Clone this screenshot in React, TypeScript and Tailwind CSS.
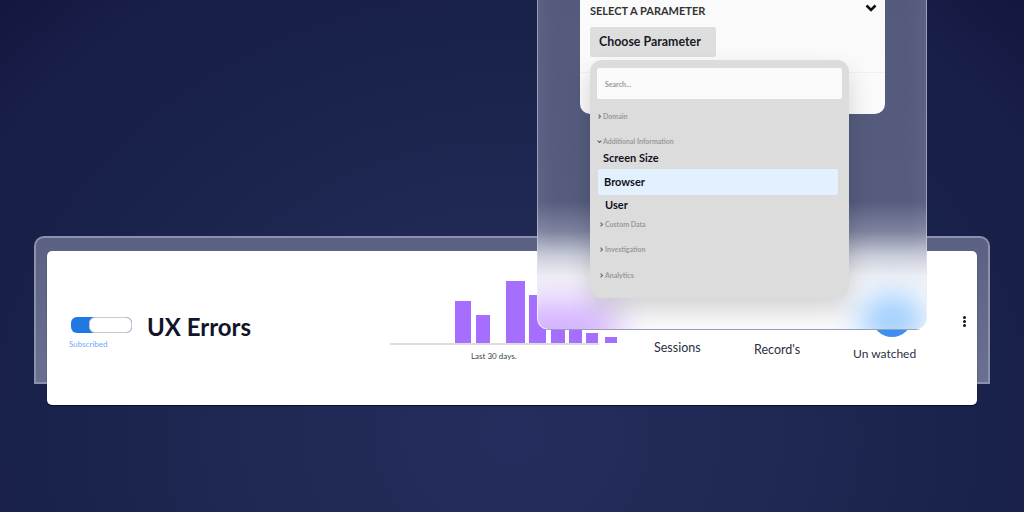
const bars = [
  { w: "w-[16px] h-[42px]", gap: "ml-[65px]" },
  { w: "w-[14px] h-[28px]", gap: "ml-[5px]" },
  { w: "w-[19px] h-[62px]", gap: "ml-[16px]" },
  { w: "w-[17px] h-[48px]", gap: "ml-[4px]" },
  { w: "w-[14px] h-[13px]", gap: "ml-[5px]" },
  { w: "w-[13px] h-[13px]", gap: "ml-[4px]" },
  { w: "w-[12px] h-[10px]", gap: "ml-[4px]" },
  { w: "w-[12px] h-[6px]", gap: "ml-[7px]" },
];

function Chevron({ open = false }: { open?: boolean }) {
  return (
    <svg viewBox="0 0 8 8" className="w-[5px] h-[5px] shrink-0 text-[#666]" fill="none" stroke="currentColor" strokeWidth={1.8}>
      <path d={open ? "M1 2.5 4 5.5 7 2.5" : "M2.5 1 5.5 4 2.5 7"} />
    </svg>
  );
}

function Section({ label, className, open }: { label: string; className: string; open?: boolean }) {
  return (
    <div className={`flex items-center gap-[1px] text-[7px] leading-[10px] font-bold text-[#9a9a9a] ${className}`}>
      <Chevron open={open} />
      <span>{label}</span>
    </div>
  );
}

function Stat({ label, className }: { label: string; className: string }) {
  return <div className={`text-[12.5px] leading-[16px] text-[#2b2f3f] whitespace-nowrap ${className}`}>{label}</div>;
}

export default function App() {
  return (
    <div className="relative w-[1024px] h-[512px] overflow-hidden pt-[251px] pl-[47px] font-['Lato',sans-serif] bg-[radial-gradient(ellipse_at_50%_85%,#252d5e_0%,#1f2953_35%,#19224b_65%,#181f49_85%,#14173f_100%)]">
      <div className="relative w-[930px] h-[154px]">
        {/* frame behind the card */}
        <div className="absolute -left-[13px] -top-[15px] w-[956px] h-[148px] rounded-t-[10px] border-2 border-[#8c92ad] bg-[linear-gradient(180deg,#5b6183_0%,#6a7091_100%)]" />

        <div className="relative h-full bg-white rounded-[5px] shadow-[0_1px_1px_#0b102e] flex pl-[22px]">
          <div className="w-[78px] shrink-0 pt-[66px]">
            <div className="ml-[2px] relative w-[61px] h-[16px] rounded-[6px] bg-[#2079e3] overflow-hidden">
              <div className="absolute left-[18px] top-0 w-[43px] h-[16px] rounded-[6px] bg-white border border-[#c9c9c9]" />
            </div>
            <div className="mt-[6px] text-[8px] leading-[10px] text-[#6fa9ff]">Subscribed</div>
          </div>

          <div className="w-[105px] shrink-0 pt-[61px] text-[24px] leading-[30px] font-bold text-[#12142a] whitespace-nowrap">UX Errors</div>

          <div className="ml-[138px] w-[227px] shrink-0 pt-[29px]">
            <div className="h-[63px] flex items-end">
              {bars.map((b, i) => (
                <div key={i} className={`${b.w} ${b.gap} bg-[#a66eff]`} />
              ))}
            </div>
            <div className="h-[2px] w-[209px] bg-[#dddddd]" />
            <div className="ml-[81px] mt-[5px] text-[8px] leading-[12px] text-[#3c3f4d] whitespace-nowrap">Last 30 days.</div>
          </div>

          <Stat label="Sessions" className="ml-[37px] w-[100px] pt-[89px]" />
          <Stat label="Record's" className="w-[99px] pt-[91px]" />
          <div className="w-[64px] relative">
            <div className="absolute left-[19px] top-[46px] w-[40px] h-[40px] rounded-full bg-[#3f8ff0]" />
            <Stat label="Un watched" className="pt-[95px] text-[12px]" />
          </div>

          <div className="ml-[46px] pt-[65px] flex flex-col gap-[1px]">
            <div className="w-[3px] h-[3px] rounded-full bg-[#12142a]" />
            <div className="w-[3px] h-[3px] rounded-full bg-[#12142a]" />
            <div className="w-[3px] h-[3px] rounded-full bg-[#12142a]" />
          </div>
        </div>
      </div>

      {/* glass panel over the card */}
      <div className="absolute left-[537px] -top-[40px] w-[390px] h-[370px] rounded-b-[12px] border border-[#dfe3ee]/50 overflow-hidden bg-[linear-gradient(180deg,#535a7c_0px,#555c7e_240px,#7d829e_270px,#c9ccd9_295px,#f0f1f5_315px,#fbfbfc_335px)] pl-[42px] pr-[41px]">
        <div className="absolute inset-0 shadow-[inset_0_0_24px_rgba(255,255,255,0.1)]" />
        <div className="absolute -left-[40px] top-[340px] w-[120px] h-[60px] rounded-full bg-[#c79cff] opacity-80 blur-[18px]" />
        <div className="absolute left-[322px] top-[335px] w-[64px] h-[46px] rounded-full bg-[#7cbcff] opacity-80 blur-[16px]" />
        <div className="relative h-[153px] bg-[#fafafa] rounded-b-[10px] pt-[43px]">
          <div className="flex items-center justify-between pl-[10px] pr-[8px] h-[14px]">
            <span className="text-[11px] font-bold text-[#333333]">SELECT A PARAMETER</span>
            <svg viewBox="0 0 12 8" className="w-[12px] h-[8px] -mt-[7px]" fill="none" stroke="#111111" strokeWidth={2.6}>
              <path d="M1.5 1.5 6 6l4.5-4.5" />
            </svg>
          </div>
          <div className="ml-[10px] mt-[9px] w-[126px] h-[30px] bg-[#dedede] rounded-[2px] flex items-center pl-[9px] text-[12.4px] font-bold text-[#1a1a24]">Choose Parameter</div>
          <div className="mt-[15px] h-[1px] bg-[#f0f0f0]" />
        </div>
      </div>

      {/* dropdown */}
      <div className="absolute left-[590px] top-[60px] w-[259px] h-[238px] rounded-[12px] bg-[#dcdcdc] shadow-[0_12px_24px_rgba(0,0,0,0.16)] pt-[8px] px-[7px]">
        <div className="w-[245px] h-[31px] bg-[#fafafa] rounded-[2px] flex items-center pl-[8px] pt-[2px] text-[7px] font-bold text-[#999999]">Search...</div>
        <Section label="Domain" className="mt-[12px]" />
        <Section label="Additional Information" open className="mt-[15px]" />
        <div className="mt-[5px] ml-[6px] text-[11px] leading-[14px] font-bold text-[#12121c]">Screen Size</div>
        <div className="mt-[4px] ml-[1px] w-[240px] h-[26px] bg-[#e3f1fe] rounded-[2px] flex items-center pl-[6px] text-[11px] font-bold text-[#12121c]">Browser</div>
        <div className="mt-[3px] ml-[8px] text-[11px] leading-[14px] font-bold text-[#12121c]">User</div>
        <Section label="Custom Data" className="mt-[7px] ml-[2px]" />
        <Section label="Investigation" className="mt-[15px] ml-[2px]" />
        <Section label="Analytics" className="mt-[16px] ml-[2px]" />
      </div>
    </div>
  );
}
